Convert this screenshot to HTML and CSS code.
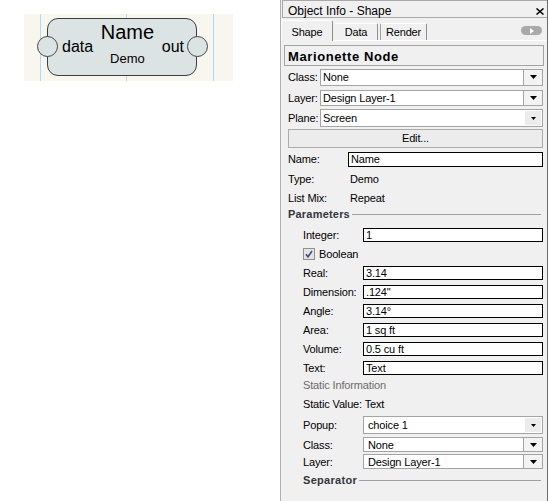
FILE: index.html
```html
<!DOCTYPE html>
<html>
<head>
<meta charset="utf-8">
<link rel="stylesheet" href="styles.css">
</head>
<body>
<div class="page">
  <div class="left">
    <div class="canvas">
      <div class="guide g1"></div>
      <div class="guide g2"></div>
      <div class="guide g3"></div>
      <div class="node">
        <span class="port port-in"></span>
        <span class="pin pin-in">data</span>
        <div class="node-title">
          <div class="node-name">Name</div>
          <div class="node-type">Demo</div>
        </div>
        <span class="pin pin-out">out</span>
        <span class="port port-out"></span>
      </div>
    </div>
  </div>

  <div class="panel">
    <div class="titlebar">
      <span class="title">Object Info - Shape</span>
      <svg class="close" width="8" height="7" viewBox="0 0 8 7"><path d="M0.5 0.5L7.5 6.5M7.5 0.5L0.5 6.5" stroke="#000" stroke-width="1.5"/></svg>
    </div>
    <div class="tabs">
      <div class="tab active t-shape">Shape</div>
      <div class="tab t-data">Data</div>
      <div class="tab t-render">Render</div>
      <div class="pill"><svg width="4" height="6" viewBox="0 0 4 6"><path d="M0 0L4 3L0 6Z" fill="#fff"/></svg></div>
    </div>
    <div class="content">
      <div class="objname">Marionette Node</div>

      <div class="row h22">
        <span class="lbl w32">Class:</span>
        <div class="select s17 sel-top"><span class="val">None</span><span class="dd"><svg width="7" height="4" viewBox="0 0 7 4"><path d="M0 0H7L3.5 4Z"/></svg></span></div>
      </div>
      <div class="row h20">
        <span class="lbl w32">Layer:</span>
        <div class="select s16 sel-top"><span class="val">Design Layer-1</span><span class="dd"><svg width="7" height="4" viewBox="0 0 7 4"><path d="M0 0H7L3.5 4Z"/></svg></span></div>
      </div>
      <div class="row h20">
        <span class="lbl w32">Plane:</span>
        <div class="select s18 sel-top"><span class="val">Screen</span><span class="dd small"><svg width="5" height="3" viewBox="0 0 5 3"><path d="M0 0H5L2.5 3Z"/></svg></span></div>
      </div>
      <div class="row h21">
        <div class="button">Edit...</div>
      </div>
      <div class="row h20">
        <span class="lbl w60">Name:</span>
        <div class="input name-input">Name</div>
      </div>
      <div class="row h19">
        <span class="lbl w62">Type:</span><span>Demo</span>
      </div>
      <div class="row h19">
        <span class="lbl w62">List Mix:</span><span>Repeat</span>
      </div>
      <div class="row h14 group">
        <span class="group-title">Parameters</span><span class="rule"></span>
      </div>

      <div class="params">
        <div class="row h19 first">
          <span class="lbl w60">Integer:</span><div class="input p">1</div>
        </div>
        <div class="row h19">
          <span class="check"><svg width="10" height="10" viewBox="0 0 10 10"><path d="M2 5.2L4 7.8L8 2" fill="none" stroke="#3b4f86" stroke-width="1.6"/></svg></span><span>Boolean</span>
        </div>
        <div class="row h19">
          <span class="lbl w60">Real:</span><div class="input p">3.14</div>
        </div>
        <div class="row h19">
          <span class="lbl w60">Dimension:</span><div class="input p">.124"</div>
        </div>
        <div class="row h19">
          <span class="lbl w60">Angle:</span><div class="input p">3.14°</div>
        </div>
        <div class="row h19">
          <span class="lbl w60">Area:</span><div class="input p">1 sq ft</div>
        </div>
        <div class="row h19">
          <span class="lbl w60">Volume:</span><div class="input p">0.5 cu ft</div>
        </div>
        <div class="row h19">
          <span class="lbl w60">Text:</span><div class="input p">Text</div>
        </div>
        <div class="row h16">
          <span class="static">Static Information</span>
        </div>
        <div class="row h21">
          <span>Static Value: Text</span>
        </div>
        <div class="row h22">
          <span class="lbl w60">Popup:</span>
          <div class="select s18 sel-low"><span class="val pad">choice 1</span><span class="dd small"><svg width="5" height="3" viewBox="0 0 5 3"><path d="M0 0H5L2.5 3Z"/></svg></span></div>
        </div>
        <div class="row h17">
          <span class="lbl w60">Class:</span>
          <div class="select s15 sel-low"><span class="val pad">None</span><span class="dd"><svg width="7" height="4" viewBox="0 0 7 4"><path d="M0 0H7L3.5 4Z"/></svg></span></div>
        </div>
        <div class="row h17">
          <span class="lbl w60">Layer:</span>
          <div class="select s15 sel-low"><span class="val pad">Design Layer-1</span><span class="dd"><svg width="7" height="4" viewBox="0 0 7 4"><path d="M0 0H7L3.5 4Z"/></svg></span></div>
        </div>
        <div class="row h20 group">
          <span class="group-title sep">Separator</span><span class="rule"></span>
        </div>
      </div>
    </div>
  </div>
</div>
</body>
</html>
```

FILE: styles.css
```css
html, body {
  margin: 0;
  padding: 0;
  background: #fff;
}

.page {
  display: flex;
  width: 549px;
  height: 501px;
  overflow: hidden;
}

/* ---------- left canvas ---------- */
.left {
  width: 280px;
  flex: none;
  box-sizing: border-box;
  padding: 14px 0 0 24px;
}

.canvas {
  position: relative;
  width: 209px;
  height: 67px;
  background: #f7f7ef;
}

.guide {
  position: absolute;
  top: 0;
  bottom: 0;
  width: 1px;
  background: #b7d7f1;
}
.g1 { left: 16px; }
.g2 { left: 102px; }
.g3 { left: 189px; }

.node {
  position: absolute;
  left: 23px;
  top: 4px;
  width: 150px;
  height: 58px;
  box-sizing: border-box;
  border: 1px solid #3e3e3e;
  border-radius: 11px;
  background: #dce3e3;
  display: flex;
  align-items: flex-start;
  padding: 0 12px 0 14px;
  font-family: "Liberation Sans", Arial, sans-serif;
  color: #000;
}

.port {
  position: absolute;
  width: 21px;
  height: 21px;
  box-sizing: border-box;
  border: 1px solid #454545;
  border-radius: 50%;
  background: #dce3e3;
  top: 17px;
}
.port-in { left: -11px; }
.port-out { right: -12px; }

.pin {
  font-size: 16px;
  line-height: 18px;
  margin-top: 19px;
}

.node-title {
  flex: 1;
  text-align: center;
  padding-top: 2px;
}
.node-name {
  font-size: 20px;
  line-height: 23px;
}
.node-type {
  font-size: 13px;
  line-height: 15px;
  margin-top: 7px;
}

/* ---------- panel ---------- */
.panel {
  width: 268px;
  height: 501px;
  flex: none;
  box-sizing: border-box;
  border-left: 1px solid #b0b0b0;
  border-right: 1px solid #6b6b6b;
  background: #f0f0f0;
  font-family: "Liberation Sans", Arial, sans-serif;
  font-size: 11px;
  letter-spacing: -0.15px;
  color: #000;
}

.titlebar {
  height: 18px;
  box-sizing: border-box;
  margin-left: 1px;
  border: 1px solid #a9a9a9;
  border-right: none;
  display: flex;
  align-items: flex-start;
  padding: 3px 3px 0 5px;
}
.title {
  font-size: 12px;
  line-height: 14px;
  letter-spacing: 0;
}
.close {
  margin-left: auto;
  margin-top: 4px;
}

.tabs {
  height: 23px;
  box-sizing: border-box;
  border-bottom: 1px solid #fff;
  display: flex;
  align-items: flex-end;
}

.tab {
  box-sizing: border-box;
  height: 17px;
  line-height: 16px;
  text-align: center;
  border-top: 1px solid #fff;
  border-left: 1px solid #fff;
  border-right: 1px solid #8d8d8d;
  border-radius: 2px 2px 0 0;
  background: #f0f0f0;
}
.tab.active {
  height: 21px;
  padding-top: 3px;
  margin-bottom: -1px;
  position: relative;
}
.t-shape { width: 52px; }
.t-data { width: 44px; margin-left: 1px; border-left-color: #f0f0f0; }
.t-render { width: 47px; margin-left: 2px; border-left-color: #a0a0a0; }

.pill {
  align-self: flex-start;
  margin: 8px 5px 0 auto;
  width: 21px;
  height: 9px;
  border-radius: 5px;
  background: #a9a9a9;
  display: flex;
  align-items: center;
  justify-content: center;
}

.content {
  padding: 4px 3px 0 3px;
}

.objname {
  height: 21px;
  box-sizing: border-box;
  border: 1px solid #a3a3a3;
  padding: 2px 0 0 3px;
  font-size: 13px;
  line-height: 17px;
  font-weight: bold;
  letter-spacing: 0.6px;
}

.row {
  display: flex;
  align-items: center;
  padding-left: 4px;
  white-space: nowrap;
}
.h14 { height: 14px; }
.h16 { height: 16px; }
.h17 { height: 17px; }
.h18 { height: 18px; }
.h19 { height: 19px; }
.h20 { height: 20px; }
.h21 { height: 21px; }
.h22 { height: 22px; }

.lbl { flex: none; }
.w32 { width: 32px; }
.w60 { width: 60px; }
.w62 { width: 62px; }

.select {
  flex: 1;
  display: flex;
  align-items: stretch;
  box-sizing: border-box;
  border: 1px solid #a4a4a4;
  background: #fff;
}
.sel-top { margin-right: 1px; }
.sel-low { margin-right: 1px; }
.s15 { height: 15px; }
.s16 { height: 16px; }
.s17 { height: 17px; }
.s18 { height: 18px; }

.select .val {
  flex: 1;
  padding-left: 2px;
  display: flex;
  align-items: center;
}
.select .val.pad { padding-left: 4px; }

.dd {
  width: 18px;
  flex: none;
  border-left: 1px solid #a4a4a4;
  background: #f3f3f3;
  display: flex;
  align-items: center;
  justify-content: center;
}
.dd.small {
  border-left: none;
  width: 16px;
  margin: 1px 1px 1px 0;
  background: #ececec;
}
.dd svg { display: block; }

.button {
  flex: 1;
  height: 19px;
  box-sizing: border-box;
  margin-right: 1px;
  border: 1px solid #ababab;
  background: #ececec;
  text-align: center;
  line-height: 17px;
}

.input {
  flex: 1;
  box-sizing: border-box;
  border: 1px solid #000;
  background: #fff;
  padding-left: 2px;
  margin-right: 1px;
  display: flex;
  align-items: center;
}
.name-input { height: 15px; }
.input.p { height: 14px; }

.group-title {
  font-weight: bold;
  color: #33363c;
  letter-spacing: 0.2px;
  flex: none;
}
.group-title.sep {
  margin-left: 15px;
  letter-spacing: 0.3px;
}
.rule {
  flex: 1;
  height: 1px;
  background: #a0a0a0;
  margin: 1px 3px 0 2px;
}

.params .row {
  padding-left: 19px;
}
.params .row.group {
  padding-left: 4px;
}
.params .first {
  margin-top: 4px;
}

.check {
  width: 12px;
  height: 12px;
  box-sizing: border-box;
  border: 1px solid #8e8f8f;
  background: #e4e4e4;
  margin-right: 4px;
  display: flex;
  align-items: center;
  justify-content: center;
}

.static {
  color: #6d6d6d;
}
```
